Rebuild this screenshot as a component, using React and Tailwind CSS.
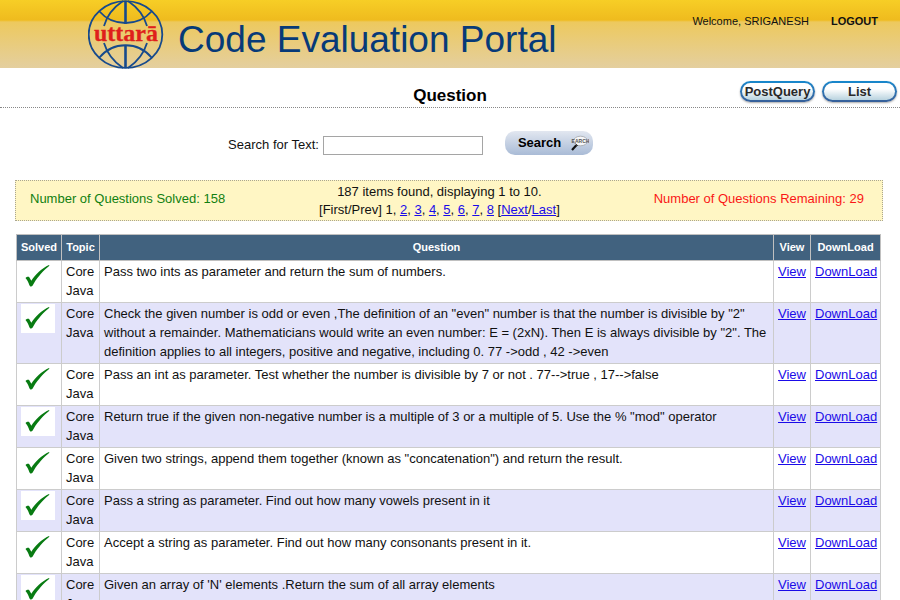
const questions = [
  'Pass two ints as parameter and return the sum of numbers.',
  'Check the given number is odd or even ,The definition of an "even" number is that the number is divisible by "2" without a remainder. Mathematicians would write an even number: E = (2xN). Then E is always divisible by "2". The definition applies to all integers, positive and negative, including 0. 77 ->odd , 42 ->even',
  'Pass an int as parameter. Test whether the number is divisible by 7 or not . 77-->true , 17-->false',
  'Return true if the given non-negative number is a multiple of 3 or a multiple of 5. Use the % "mod" operator',
  'Given two strings, append them together (known as "concatenation") and return the result.',
  'Pass a string as parameter. Find out how many vowels present in it',
  'Accept a string as parameter. Find out how many consonants present in it.',
  "Given an array of 'N' elements .Return the sum of all array elements",
];

const pages = [2, 3, 4, 5, 6, 7, 8];

function Logo() {
  return (
    <svg width="76" height="69" viewBox="0 0 76 69" role="img" aria-label="uttara">
      <g fill="none" stroke="#174a8c" strokeWidth="1.8">
        <ellipse cx="37.5" cy="34.5" rx="36.8" ry="33.4" />
        <path d="M37.5 1V24M37.5 45V68" strokeWidth="2.6" />
        <path d="M35 1C26 7 19 15 16 26M40 1C49 7 56 15 59 26" />
        <path d="M16 43C19 53 26 62 35 68M59 43C56 53 49 62 40 68" />
        <path d="M11 11C25 27 50 27 64 11M11 58C25 41 50 41 64 58" />
      </g>
      <text
        x="38"
        y="41"
        textAnchor="middle"
        fontSize="24"
        fontWeight="700"
        fill="#df1f1c"
        stroke="#df1f1c"
        strokeWidth="0.3"
        fontFamily="'Liberation Serif', serif"
      >
        uttarā
      </text>
    </svg>
  );
}

function Check() {
  return (
    <svg width="34" height="29" viewBox="0 0 34 29" className="block bg-white" role="img" aria-label="Solved">
      <path
        d="M4.500 16C5.500 14.800 7.500 14.300 8.300 15.200L10.300 18.800C14 13 21 6 28 3L28.400 3.800C23 8 17 14.500 12.800 21.500L11.500 23.800L9.800 24.700L8.500 23.500C7.500 20.500 6.500 18.500 4.500 16Z"
        fill="#087b12"
      />
    </svg>
  );
}

function Magnifier() {
  return (
    <svg width="18" height="18" viewBox="0 0 18 18" aria-hidden="true">
      <path d="M1 16L6 10.500" stroke="#111" strokeWidth="2.200" />
      <ellipse cx="9.500" cy="7" rx="7" ry="4.800" fill="#f5f6f8" stroke="#a2a5aa" strokeWidth="0.800" />
      <path d="M4.500 9.500L7 12" stroke="#444" />
      <text x="9.500" y="8.500" textAnchor="middle" fontSize="5" fill="#555" fontFamily="'Liberation Sans', sans-serif">
        EARCH
      </text>
    </svg>
  );
}

function Pill({ children }) {
  return (
    <button
      type="button"
      className="h-[21px] w-[75px] rounded-full bg-linear-to-b from-[#1588cc] to-[#365f99] p-[2px] shadow-[0_1px_2px_#aaaaaa]"
    >
      <span className="flex h-full items-center justify-center rounded-full bg-linear-to-b from-white from-35% to-[#b9d3df] text-[13px] font-bold text-[#292929]">
        {children}
      </span>
    </button>
  );
}

function TextLink({ children }) {
  return (
    <a href="#" className="text-[#1a0be8] underline">
      {children}
    </a>
  );
}

export default function App() {
  const head = 'border border-[#c0c0c0] px-1 text-[11px] font-bold';
  const cell = 'border border-[#cccccc] px-1 pt-[1px] pb-[2px] align-top';
  return (
    <div className="h-screen overflow-hidden bg-white font-['Liberation_Sans',Arial,sans-serif] text-[13px] text-[#111111]">
      <header className="flex h-[68px] items-start bg-[linear-gradient(to_bottom,#f7ce26_0px,#efbb1e_20px,#edc95e_22px,#e4cf9f_68px)] pr-[22px] pl-[88px]">
        <Logo />
        <h1 className="ml-[14px] pt-5 text-[37px] leading-10 text-[#073a78]">Code Evaluation Portal</h1>
        <div className="ml-auto flex gap-[22px] pt-[13px] text-[11px] leading-4">
          <span>Welcome, SRIGANESH</span>
          <a href="#" className="font-bold">LOGOUT</a>
        </div>
      </header>

      <div className="grid h-10 grid-cols-[1fr_auto_1fr] border-b border-dotted border-[#888888]">
        <h2 className="col-start-2 pt-[18px] text-[17px] leading-5 font-bold text-black">Question</h2>
        <div className="flex gap-[7px] justify-self-end pt-[13px] pr-[3px]">
          <Pill>PostQuery</Pill>
          <Pill>List</Pill>
        </div>
      </div>

      <form className="flex items-center justify-center pt-[23px] pr-[79px]" onSubmit={(e) => e.preventDefault()}>
        <label htmlFor="search" className="pt-1">Search for Text:</label>
        <input id="search" type="text" className="mt-1 ml-1 h-[19px] w-40 border border-[#a5a5a5] bg-white px-1" />
        <button
          type="submit"
          className="ml-[22px] flex h-6 w-[88px] items-center justify-between rounded-[10px] bg-linear-to-b from-[#e2e7f0] to-[#a9bbd6] pr-1 pl-[13px] font-bold text-black"
        >
          Search
          <Magnifier />
        </button>
      </form>

      <section className="mt-[25px] mr-[17px] ml-[15px] flex h-[41px] justify-between border border-dotted border-[#aaa691] bg-[#fff6c4] px-[14px] leading-[18px]">
        <p className="pt-[9px] text-[#118011]">Number of Questions Solved: 158</p>
        <div className="pt-[2px] text-center">
          <p>187 items found, displaying 1 to 10.</p>
          <p>
            [First/Prev] 1,{' '}
            {pages.map((page) => (
              <span key={page}>
                <TextLink>{page}</TextLink>
                {page < 8 ? ', ' : ' '}
              </span>
            ))}
            [<TextLink>Next</TextLink>/<TextLink>Last</TextLink>]
          </p>
        </div>
        <p className="pt-[9px] pr-1 text-right text-[#fa1616]">Number of Questions Remaining: 29</p>
      </section>

      <div className="mt-[13px] mr-[19px] ml-4">
        <table className="w-full table-fixed border-collapse leading-[19px]">
          <colgroup>
            <col className="w-[45px]" />
            <col className="w-[38px]" />
            <col />
            <col className="w-[37px]" />
            <col className="w-[70px]" />
          </colgroup>
          <thead>
            <tr className="h-[26px] bg-[#41627f] text-white">
              <th className={head}>Solved</th>
              <th className={head}>Topic</th>
              <th className={head}>Question</th>
              <th className={head}>View</th>
              <th className={head}>DownLoad</th>
            </tr>
          </thead>
          <tbody>
            {questions.map((question) => (
              <tr key={question} className="even:bg-[#e3e3fa]">
                <td className="border border-[#cccccc] px-1 py-[1px] align-top">
                  <Check />
                </td>
                <td className={cell}>Core Java</td>
                <td className={cell}>{question}</td>
                <td className={cell}><TextLink>View</TextLink></td>
                <td className={cell}><TextLink>DownLoad</TextLink></td>
              </tr>
            ))}
          </tbody>
        </table>
      </div>
    </div>
  );
}
